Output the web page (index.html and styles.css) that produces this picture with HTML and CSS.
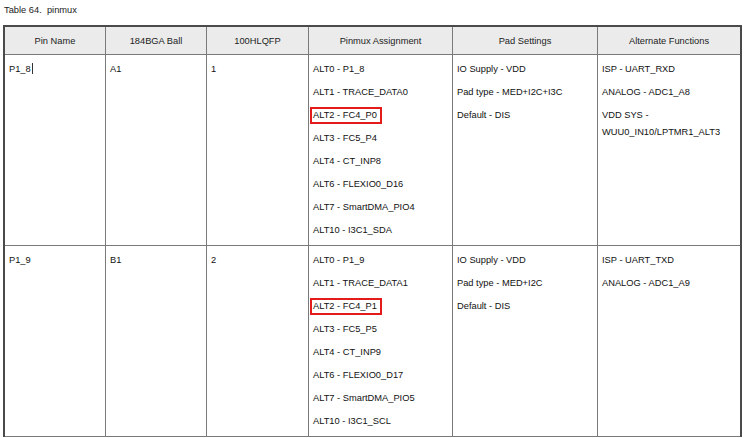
FILE: index.html
```html
<!DOCTYPE html>
<html lang="en">
<head>
<meta charset="utf-8">
<title>Table 64. pinmux</title>
<link rel="stylesheet" href="styles.css">
</head>
<body>
<div class="caption">Table 64.&nbsp;&nbsp;pinmux</div>
<div class="table">
  <div class="th">Pin Name</div>
  <div class="th">184BGA Ball</div>
  <div class="th">100HLQFP</div>
  <div class="th">Pinmux Assignment</div>
  <div class="th">Pad Settings</div>
  <div class="th last">Alternate Functions</div>

  <div class="td"><div class="item">P1_8<span class="caret"></span></div></div>
  <div class="td"><div class="item">A1</div></div>
  <div class="td"><div class="item">1</div></div>
  <div class="td">
    <div class="item">ALT0 - P1_8</div>
    <div class="item">ALT1 - TRACE_DATA0</div>
    <div class="item"><span class="hl">ALT2 - FC4_P0</span></div>
    <div class="item">ALT3 - FC5_P4</div>
    <div class="item">ALT4 - CT_INP8</div>
    <div class="item">ALT6 - FLEXIO0_D16</div>
    <div class="item">ALT7 - SmartDMA_PIO4</div>
    <div class="item">ALT10 - I3C1_SDA</div>
  </div>
  <div class="td">
    <div class="item">IO Supply - VDD</div>
    <div class="item">Pad type - MED+I2C+I3C</div>
    <div class="item">Default - DIS</div>
  </div>
  <div class="td last">
    <div class="item">ISP - UART_RXD</div>
    <div class="item">ANALOG - ADC1_A8</div>
    <div class="item">VDD SYS - WUU0_IN10/LPTMR1_ALT3</div>
  </div>

  <div class="td"><div class="item">P1_9</div></div>
  <div class="td"><div class="item">B1</div></div>
  <div class="td"><div class="item">2</div></div>
  <div class="td">
    <div class="item">ALT0 - P1_9</div>
    <div class="item">ALT1 - TRACE_DATA1</div>
    <div class="item"><span class="hl">ALT2 - FC4_P1</span></div>
    <div class="item">ALT3 - FC5_P5</div>
    <div class="item">ALT4 - CT_INP9</div>
    <div class="item">ALT6 - FLEXIO0_D17</div>
    <div class="item">ALT7 - SmartDMA_PIO5</div>
    <div class="item">ALT10 - I3C1_SCL</div>
  </div>
  <div class="td">
    <div class="item">IO Supply - VDD</div>
    <div class="item">Pad type - MED+I2C</div>
    <div class="item">Default - DIS</div>
  </div>
  <div class="td last">
    <div class="item">ISP - UART_TXD</div>
    <div class="item">ANALOG - ADC1_A9</div>
  </div>
</div>
</body>
</html>
```

FILE: styles.css
```css
* { box-sizing: border-box; }

html, body {
  margin: 0;
  padding: 0;
  background: #ffffff;
}

body {
  font-family: "Liberation Sans", Arial, sans-serif;
  font-size: 9.3px;
  color: #111111;
  overflow: hidden;
}

.caption {
  padding: 4px 0 0 4px;
  line-height: 12px;
  color: #222222;
}

.table {
  margin: 9px 0 0 3px;
  width: 739px;
  display: grid;
  grid-template-columns: 101px 101px 102px 144px 145px 142px;
  border-top: 2px solid #4a4a4a;
  border-left: 2px solid #4a4a4a;
  border-right: 2px solid #4a4a4a;
}

.th {
  background: #ebebeb;
  height: 28px;
  display: flex;
  align-items: center;
  justify-content: center;
  border-right: 1px solid #7a7a7a;
  border-bottom: 1px solid #7a7a7a;
  color: #222222;
}

.td {
  padding: 6px 4px 0 4px;
  border-right: 1px solid #7a7a7a;
  border-bottom: 1px solid #7a7a7a;
  min-height: 191px;
}

.th.last, .td.last { border-right: none; }

.item {
  line-height: 17px;
  margin-bottom: 6px;
}

.caret {
  display: inline-block;
  width: 1px;
  height: 11px;
  background: #333333;
  vertical-align: -2px;
  margin-left: 1px;
}

.hl {
  display: inline-block;
  vertical-align: top;
  line-height: 13px;
  border: 2px solid #e41b1b;
  padding: 0 3px 0 1px;
  margin-left: -3px;
}
```
